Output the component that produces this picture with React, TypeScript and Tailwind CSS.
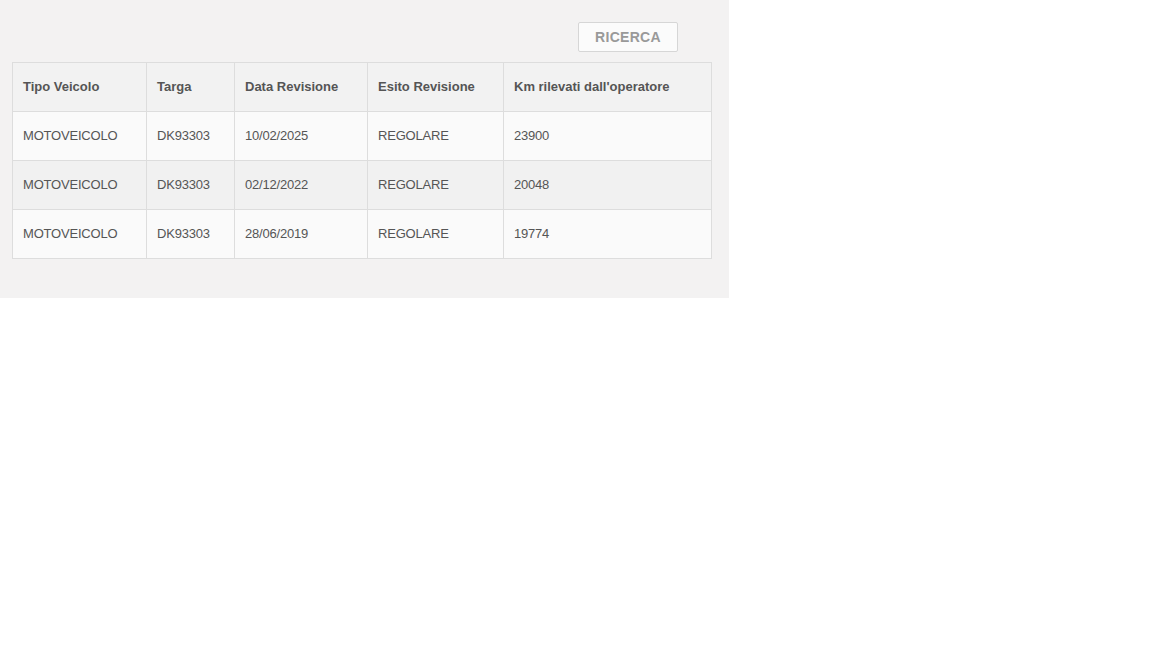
import React from "react";

const rows = [
  ["MOTOVEICOLO", "DK93303", "10/02/2025", "REGOLARE", "23900"],
  ["MOTOVEICOLO", "DK93303", "02/12/2022", "REGOLARE", "20048"],
  ["MOTOVEICOLO", "DK93303", "28/06/2019", "REGOLARE", "19774"],
];
const heads = ["Tipo Veicolo", "Targa", "Data Revisione", "Esito Revisione", "Km rilevati dall'operatore"];
const widths = ["w-[134px]", "w-[88px]", "w-[133px]", "w-[136px]", "w-[208px]"];

export default function App() {
  return (
    <div className="min-h-screen bg-white" style={{ fontFamily: '"Liberation Sans", Arial, sans-serif' }}>
      <div className="w-[729px] h-[298px] bg-[#f3f2f2] pt-[22px] pl-[12px]">
        <div className="flex justify-end w-[666px]">
          <button className="w-[100px] h-[30px] bg-[#fbfbfb] border border-[#d6d6d6] rounded-[2px] text-[14px] font-bold text-[#999999] tracking-[0.3px]">
            RICERCA
          </button>
        </div>
        <table className="mt-[10px] border-collapse border border-[#dddddd] text-[13px] text-[#555555]">
          <thead>
            <tr className="bg-[#f2f2f2] h-[49px]">
              {heads.map((h, i) => (
                <th key={i} className={`${widths[i]} border border-[#dddddd] text-left font-bold pl-[10px] pr-2`}>
                  {h}
                </th>
              ))}
            </tr>
          </thead>
          <tbody>
            {rows.map((r, ri) => (
              <tr key={ri} className={`h-[49px] ${ri % 2 === 1 ? "bg-[#f1f1f1]" : "bg-[#fafafa]"}`}>
                {r.map((c, ci) => (
                  <td key={ci} className={`${widths[ci]} border border-[#dddddd] pl-[10px] pr-2 tracking-[-0.2px]`}>
                    {c}
                  </td>
                ))}
              </tr>
            ))}
          </tbody>
        </table>
      </div>
    </div>
  );
}
